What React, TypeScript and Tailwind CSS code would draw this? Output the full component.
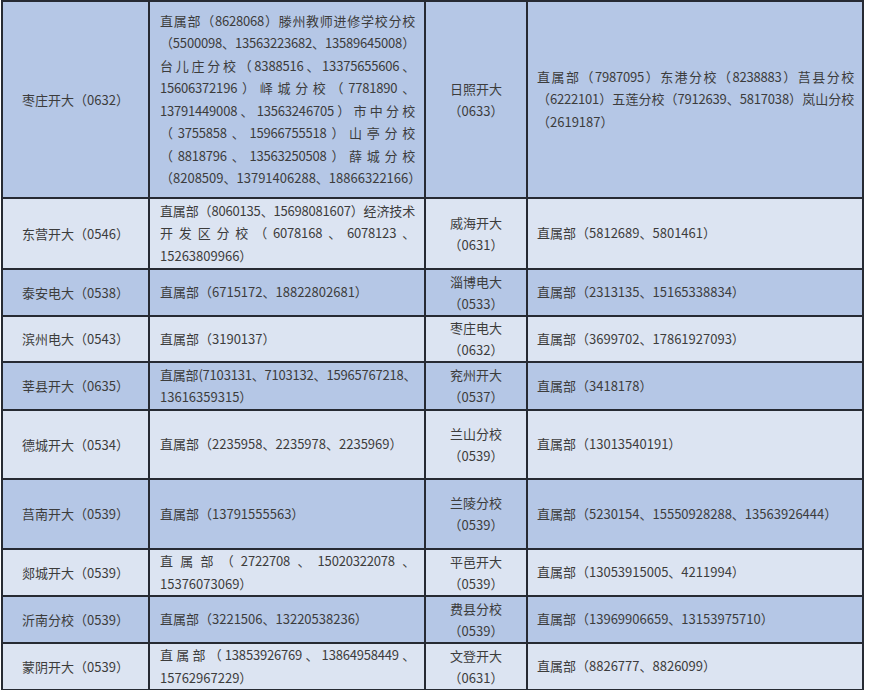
import React from 'react'

type Row = {
  city: string
  main: string[]
  city2: string
  code2: string
  side: string[]
  h: string
  dark: boolean
}

const rows: Row[] = [
  {
    city: '枣庄开大（0632）',
    main: [
      '直属部（8628068）滕州教师进修学校分校',
      '（5500098、13563223682、13589645008）',
      '台儿庄分校（8388516、13375655606、',
      '15606372196）峄城分校（7781890、',
      '13791449008、13563246705）市中分校',
      '（3755858、15966755518）山亭分校',
      '（8818796、13563250508）薛城分校',
      '（8208509、13791406288、18866322166）'
    ],
    city2: '日照开大',
    code2: '（0633）',
    side: [
      '直属部（7987095）东港分校（8238883）莒县分校',
      '（6222101）五莲分校（7912639、5817038）岚山分校',
      '（2619187）'
    ],
    h: 'h-[197px]',
    dark: true
  },
  {
    city: '东营开大（0546）',
    main: ['直属部（8060135、15698081607）经济技术', '开发区分校（6078168、6078123、', '15263809966）'],
    city2: '威海开大',
    code2: '（0631）',
    side: ['直属部（5812689、5801461）'],
    h: 'h-[71px]',
    dark: false
  },
  {
    city: '泰安电大（0538）',
    main: ['直属部（6715172、18822802681）'],
    city2: '淄博电大',
    code2: '（0533）',
    side: ['直属部（2313135、15165338834）'],
    h: 'h-[47px]',
    dark: true
  },
  {
    city: '滨州电大（0543）',
    main: ['直属部（3190137）'],
    city2: '枣庄电大',
    code2: '（0632）',
    side: ['直属部（3699702、17861927093）'],
    h: 'h-[45px]',
    dark: false
  },
  {
    city: '莘县开大（0635）',
    main: ['直属部(7103131、7103132、15965767218、', '13616359315）'],
    city2: '兖州开大',
    code2: '（0537）',
    side: ['直属部（3418178）'],
    h: 'h-[48px]',
    dark: true
  },
  {
    city: '德城开大（0534）',
    main: ['直属部（2235958、2235978、2235969）'],
    city2: '兰山分校',
    code2: '（0539）',
    side: ['直属部（13013540191）'],
    h: 'h-[69px]',
    dark: false
  },
  {
    city: '莒南开大（0539）',
    main: ['直属部（13791555563）'],
    city2: '兰陵分校',
    code2: '（0539）',
    side: ['直属部（5230154、15550928288、13563926444）'],
    h: 'h-[70px]',
    dark: true
  },
  {
    city: '郯城开大（0539）',
    main: ['直属部（2722708、15020322078、', '15376073069）'],
    city2: '平邑开大',
    code2: '（0539）',
    side: ['直属部（13053915005、4211994）'],
    h: 'h-[47px]',
    dark: false
  },
  {
    city: '沂南分校（0539）',
    main: ['直属部（3221506、13220538236）'],
    city2: '费县分校',
    code2: '（0539）',
    side: ['直属部（13969906659、13153975710）'],
    h: 'h-[47px]',
    dark: true
  },
  {
    city: '蒙阴开大（0539）',
    main: ['直属部（13853926769、13864958449、', '15762967229）'],
    city2: '文登开大',
    code2: '（0631）',
    side: ['直属部（8826777、8826099）'],
    h: 'h-[46px]',
    dark: false
  }
]

// each line is its own block so the breaks match; all but the last are stretched
function Lines({ lines }: { lines: string[] }) {
  return (
    <div className="leading-[22.5px]">
      {lines.map((line, i) => (
        <div
          key={i}
          className={
            i < lines.length - 1
              ? 'whitespace-nowrap tracking-[-0.2px] text-justify [text-align-last:justify]'
              : 'whitespace-nowrap'
          }
        >
          {line}
        </div>
      ))}
    </div>
  )
}

const cell = 'border-2 border-[#262a33] align-middle'

export default function App(): React.ReactElement {
  return (
    <main className="w-[869px] h-[690px] overflow-hidden bg-white">
      <table className="ml-[1px] w-[861px] table-fixed border-collapse font-['Noto_Sans_CJK_SC','Noto_Sans',sans-serif] text-[13px] text-[#3c3c3c]">
        <colgroup>
          <col className="w-[147px]" />
          <col className="w-[276px]" />
          <col className="w-[102px]" />
          <col className="w-[336px]" />
        </colgroup>
        <tbody>
          {rows.map((r) => (
            <tr key={r.city} className={`${r.h} ${r.dark ? 'bg-[#b5c7e6]' : 'bg-[#dce4f2]'}`}>
              <td className={`${cell} text-center whitespace-nowrap`}>{r.city}</td>
              <td className={`${cell} pl-[10px] pr-[9px]`}>
                <Lines lines={r.main} />
              </td>
              <td className={`${cell} text-center leading-[22px]`}>
                <div>{r.city2}</div>
                <div>{r.code2}</div>
              </td>
              <td className={`${cell} pl-[9px] pr-[8px]`}>
                <Lines lines={r.side} />
              </td>
            </tr>
          ))}
          {/* next row, only its top edge shows */}
          <tr className="h-[47px] bg-[#b5c7e6]">
            <td className={cell} />
            <td className={cell} />
            <td className={cell} />
            <td className={cell} />
          </tr>
        </tbody>
      </table>
    </main>
  )
}
